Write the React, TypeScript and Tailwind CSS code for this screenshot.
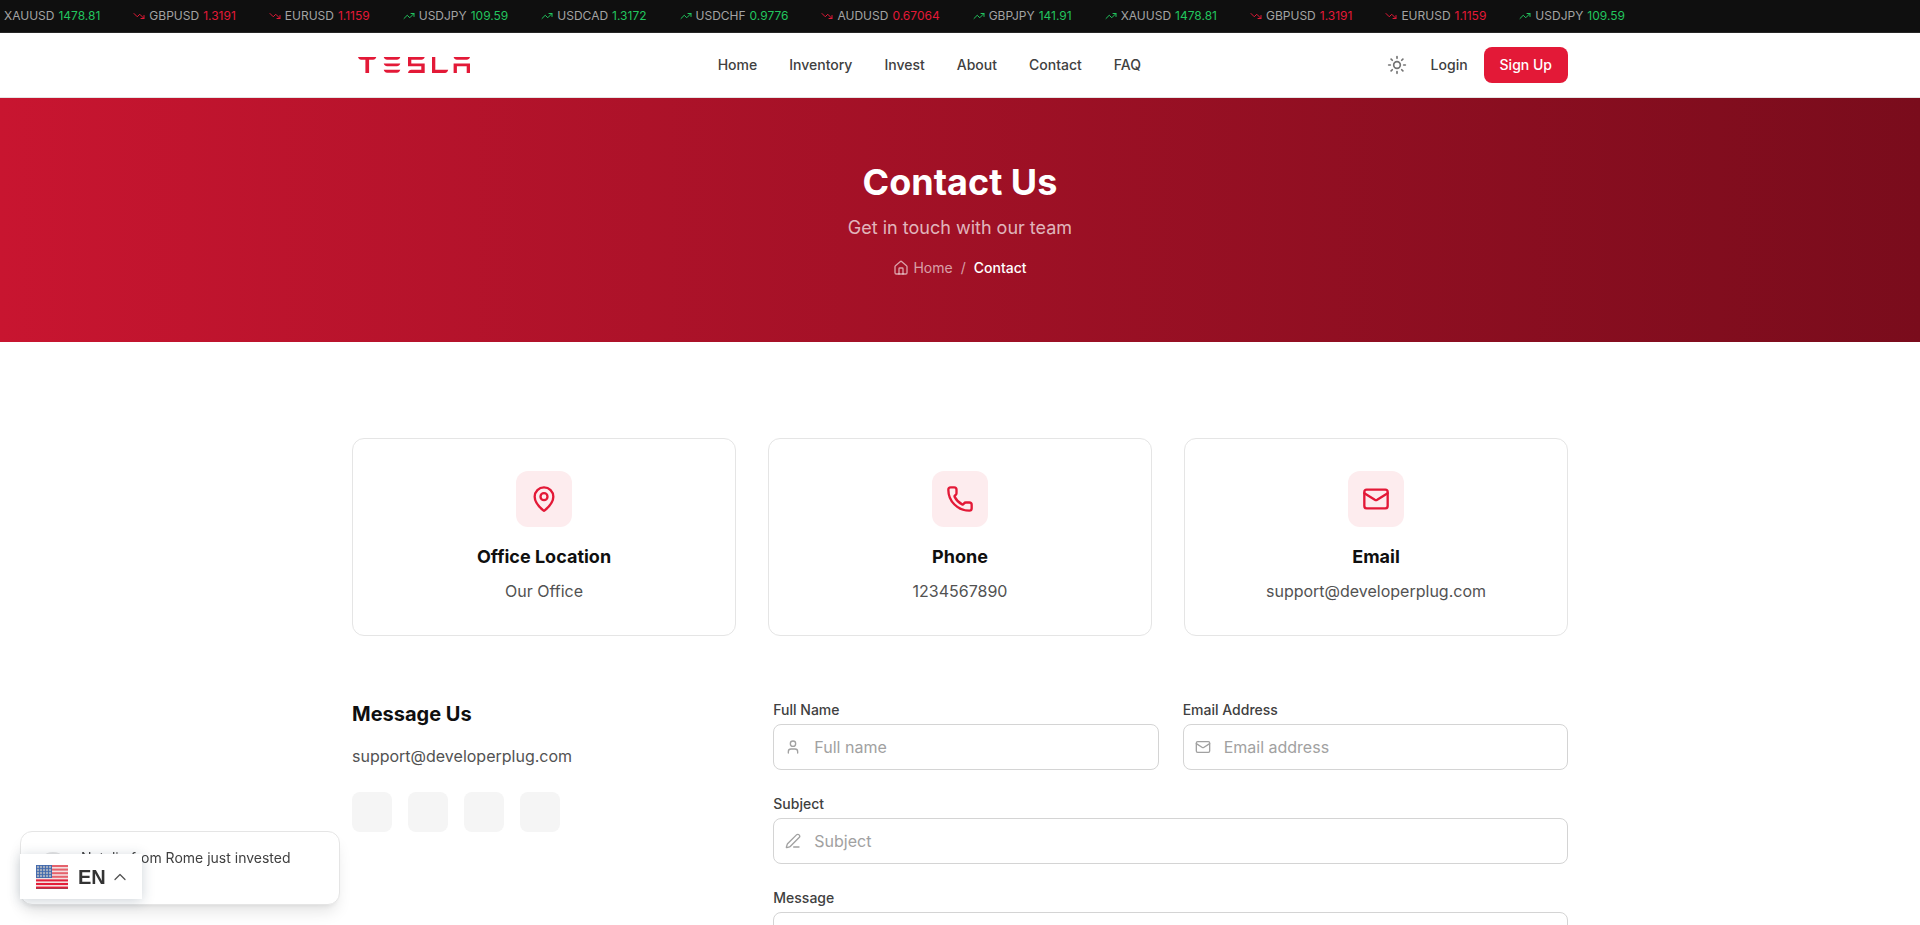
import { ChevronUp, House, Mail, MapPin, PenLine, Phone, Sun, TrendingDown, TrendingUp, User, type LucideIcon } from "lucide-react";

type Quote = { pair: string; rate: string; up: boolean };

const quotes: Quote[] = [
  { pair: "XAUUSD", rate: "1478.81", up: true },
  { pair: "GBPUSD", rate: "1.3191", up: false },
  { pair: "EURUSD", rate: "1.1159", up: false },
  { pair: "USDJPY", rate: "109.59", up: true },
  { pair: "USDCAD", rate: "1.3172", up: true },
  { pair: "USDCHF", rate: "0.9776", up: true },
  { pair: "AUDUSD", rate: "0.67064", up: false },
  { pair: "GBPJPY", rate: "141.91", up: true },
  { pair: "XAUUSD", rate: "1478.81", up: true },
  { pair: "GBPUSD", rate: "1.3191", up: false },
  { pair: "EURUSD", rate: "1.1159", up: false },
  { pair: "USDJPY", rate: "109.59", up: true },
];

function Ticker() {
  return (
    <div className="overflow-hidden border-b border-[#262626] bg-[#0f0f0f]">
      <div className="-ml-3 flex h-8 items-center gap-[33px] text-xs whitespace-nowrap">
        {quotes.map((q, i) => (
          <div key={i} className="flex shrink-0 items-center gap-1">
            {q.up ? <TrendingUp size={12} className="text-[#22c55e]" /> : <TrendingDown size={12} className="text-[#e31937]" />}
            <span className="text-[#a3a3a3]">{q.pair}</span>
            <span className={q.up ? "text-[#22c55e]" : "text-[#e31937]"}>{q.rate}</span>
          </div>
        ))}
      </div>
    </div>
  );
}

function Logo() {
  return (
    <svg viewBox="0 0 112 16" className="h-4 w-28" fill="#e31937" role="img" aria-label="Tesla">
      <path d="M0 0h18.300c-.4 1.600-1.600 2.600-3.200 2.800h-4V16H7.400V2.800H3.200C1.600 2.600.4 1.600 0 0z" />
      <path d="M25.700 0h16.600c-.6 1.800-1.800 2.800-3.400 2.800h-9.800c-1.600 0-2.800-1-3.400-2.800zM25.700 6.500h16.600c-.6 1.800-1.800 2.800-3.400 2.800h-9.800c-1.600 0-2.800-1-3.400-2.800zM25.700 12.700h16.600c-.6 2-1.800 3-3.400 3h-9.800c-1.600 0-2.800-1-3.400-3z" />
      <path d="M50 0h16.700c-.5 1.700-1.700 2.800-3.300 2.800H53.300v3.700h13.400V16H50c.5-2 1.700-3.200 3.300-3.200h10V9.300H50z" />
      <path d="M74 0h3.300v12.800h12.900c-.4 2-1.600 3.200-3.200 3.200H74z" />
      <path d="M95.600 0H112c-.5 1.700-1.700 2.800-3.300 2.800h-9.800c-1.600 0-2.800-1.100-3.300-2.800zM95.600 6.500H112V16h-3.300V9.300h-9.800V16h-3.300z" />
    </svg>
  );
}

function Header() {
  return (
    <header className="border-b border-neutral-200 bg-white">
      <div className="mx-auto flex h-16 max-w-[1216px] items-center justify-between">
        <a href="#" className="flex w-32 pl-1.5">
          <Logo />
        </a>
        <nav className="flex gap-8 text-sm font-medium text-neutral-700">
          {["Home", "Inventory", "Invest", "About", "Contact", "FAQ"].map((t) => (
            <a key={t} href="#">{t}</a>
          ))}
        </nav>
        <div className="flex items-center gap-4 text-sm font-medium">
          <button type="button" aria-label="Toggle theme" className="p-2 text-neutral-500">
            <Sun size={20} />
          </button>
          <a href="#" className="text-neutral-700">Login</a>
          <a href="#" className="rounded-lg bg-[#e31937] px-4 py-2 text-white">Sign Up</a>
        </div>
      </div>
    </header>
  );
}

function Hero() {
  return (
    <section className="bg-linear-to-r from-[#c81530] to-[#7a0c1c] py-16 text-center">
      <h1 className="text-4xl leading-10 font-bold text-white">Contact Us</h1>
      <p className="mt-3 text-lg leading-7 text-white/70">Get in touch with our team</p>
      <nav aria-label="Breadcrumb" className="mt-4 flex items-center justify-center gap-2 text-sm text-white/60">
        <a href="#" className="flex items-center gap-1">
          <House size={16} />
          Home
        </a>
        <span>/</span>
        <span className="font-medium text-white">Contact</span>
      </nav>
    </section>
  );
}

function InfoCard({ icon: Icon, title, text }: { icon: LucideIcon; title: string; text: string }) {
  return (
    <div className="flex flex-col items-center rounded-xl border border-neutral-200 p-8">
      <div className="flex size-14 items-center justify-center rounded-xl bg-[#fdecee] text-[#e31937]">
        <Icon size={28} />
      </div>
      <h3 className="mt-4 text-lg leading-7 font-bold text-[#0f0f0f]">{title}</h3>
      <p className="mt-2 text-neutral-600">{text}</p>
    </div>
  );
}

function Field({ id, label, placeholder, icon: Icon, type = "text" }: { id: string; label: string; placeholder: string; icon: LucideIcon; type?: string }) {
  return (
    <div>
      <label htmlFor={id} className="mb-1 block text-sm font-medium text-neutral-700">{label}</label>
      <div className="relative">
        <Icon size={16} className="absolute top-1/2 left-3 -translate-y-1/2 text-neutral-400" />
        <input id={id} type={type} placeholder={placeholder} className="block h-[46px] w-full rounded-lg border border-neutral-300 bg-white pr-4 pl-10 placeholder:text-neutral-400" />
      </div>
    </div>
  );
}

function ContactForm() {
  return (
    <form className="space-y-6">
      <div className="grid grid-cols-2 gap-6">
        <Field id="name" label="Full Name" placeholder="Full name" icon={User} />
        <Field id="email" label="Email Address" placeholder="Email address" icon={Mail} type="email" />
      </div>
      <Field id="subject" label="Subject" placeholder="Subject" icon={PenLine} />
      <div>
        <label htmlFor="message" className="mb-1 block text-sm font-medium text-neutral-700">Message</label>
        <textarea id="message" rows={5} className="block w-full resize-none rounded-lg border border-neutral-300 px-4 py-3" />
      </div>
    </form>
  );
}

function Flag() {
  const stripes = [0, 1, 2, 3, 4, 5, 6];
  const rows = [0, 1, 2, 3];
  const columns = [0, 1, 2, 3, 4];
  return (
    <svg viewBox="0 0 32 24" className="h-6 w-8" aria-hidden="true">
      <rect width="32" height="24" rx="1" fill="#f3dfe0" />
      {stripes.map((s) => (
        <rect key={s} y={s * 3.6} width="32" height="2" fill={s < 4 ? "#e5626c" : "#e31f3a"} />
      ))}
      <rect width="16" height="13" fill="#4169ad" />
      {rows.map((r) =>
        columns.map((c) => <circle key={`${r}-${c}`} cx={2 + c * 3} cy={2 + r * 3} r="1.2" fill="#a5afc0" />),
      )}
      <rect y="23" width="32" height="1" fill="#a83a4c" />
    </svg>
  );
}

export default function App() {
  return (
    <div className="h-screen overflow-hidden bg-white font-['Inter',sans-serif] text-base text-[#0f0f0f]">
      <Ticker />
      <Header />
      <Hero />
      <main className="mx-auto max-w-[1216px] py-24">
        <div className="grid grid-cols-3 gap-8">
          <InfoCard icon={MapPin} title="Office Location" text="Our Office" />
          <InfoCard icon={Phone} title="Phone" text="1234567890" />
          <InfoCard icon={Mail} title="Email" text="support@developerplug.com" />
        </div>
        <div className="mt-16 grid grid-cols-3 gap-12">
          <div>
            <h2 className="text-xl leading-7 font-bold">Message Us</h2>
            <p className="mt-4 text-neutral-600">support@developerplug.com</p>
            <div className="mt-6 flex gap-4">
              {["Facebook", "Twitter", "Instagram", "LinkedIn"].map((n) => (
                <a key={n} href="#" aria-label={n} className="size-10 rounded-lg bg-neutral-100" />
              ))}
            </div>
          </div>
          <div className="col-span-2">
            <ContactForm />
          </div>
        </div>
      </main>

      <div className="fixed bottom-5 left-5 flex w-80 items-center gap-3 rounded-xl border border-neutral-200 bg-white p-4 shadow-lg">
        <span className="size-8 rounded-full bg-neutral-200" />
        <p className="min-h-10 text-sm text-neutral-700">Natalie from Rome just invested</p>
      </div>
      <button type="button" className="fixed bottom-[26px] left-5 flex h-[45px] w-[122px] items-center bg-white pl-4 font-['Liberation_Sans',sans-serif] text-xl font-bold text-[#333] shadow-[0_2px_12px_rgba(30,60,80,0.22)]">
        <Flag />
        <span className="ml-2.5">EN</span>
        <ChevronUp size={20} strokeWidth={1.5} className="ml-1 text-neutral-600" />
      </button>
    </div>
  );
}
